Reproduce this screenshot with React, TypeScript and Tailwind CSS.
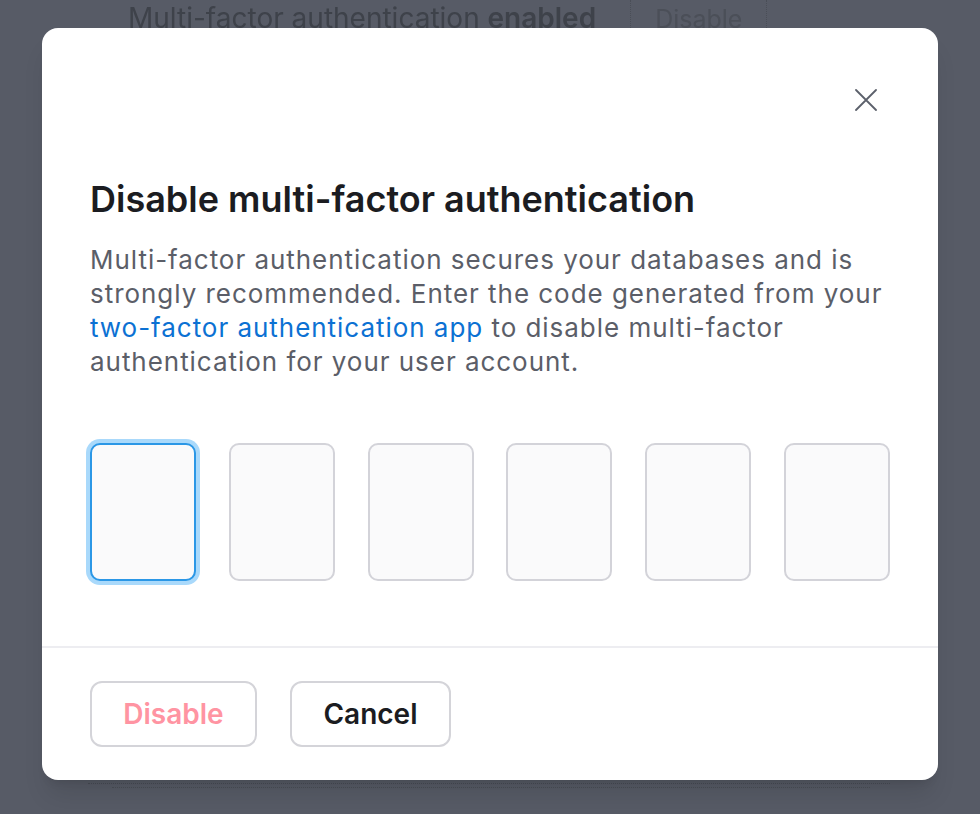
import { useState } from "react";

const DIGITS = 6;

// ── close glyph ─────────────────────────────────────────────────────────────

function CloseIcon() {
  return (
    <svg width="22" height="22" viewBox="0 0 22 22" fill="none">
      <path
        d="M1 1L21 21M21 1L1 21"
        stroke="#5c606b"
        strokeWidth="1.8"
        strokeLinecap="round"
      />
    </svg>
  );
}

// ── code input row ──────────────────────────────────────────────────────────

function CodeInputs() {
  const [values, setValues] = useState<string[]>(Array(DIGITS).fill(""));

  return (
    <div className="flex justify-between">
      {values.map((v, i) => (
        <input
          key={i}
          value={v}
          maxLength={1}
          inputMode="numeric"
          autoFocus={i === 0}
          onChange={(e) => {
            const next = [...values];
            next[i] = e.target.value.slice(-1);
            setValues(next);
          }}
          className={
            i === 0
              ? "h-[138px] w-[106px] rounded-[10px] border-2 border-[#2b97e6] bg-[#fafafb] text-center text-[40px] text-[#1b1c21] outline-none ring-[4px] ring-[#a9d9fb]"
              : "h-[138px] w-[106px] rounded-[10px] border-2 border-[#d3d3d9] bg-[#fafafb] text-center text-[40px] text-[#1b1c21] outline-none"
          }
        />
      ))}
    </div>
  );
}

// ── page ────────────────────────────────────────────────────────────────────

export default function App() {
  return (
    <div className="relative h-[814px] w-[980px] overflow-hidden bg-[#575b66] font-['Inter',sans-serif]">
      {/* page behind the overlay */}
      <div className="flex h-[40px] items-start pl-[128px] blur-[0.5px]">
        <span className="mt-[1px] text-[28px] leading-[34px] text-[#3e424a]">
          Multi-factor authentication <b className="font-semibold">enabled</b>
        </span>
        <div className="ml-[34px] h-[40px] border-l border-dotted border-[#4a4e57]" />
        <span className="mt-[2px] ml-[24px] text-[25px] leading-[34px] text-[#4b4f58]">
          Disable
        </span>
        <div className="ml-[24px] h-[40px] border-l border-dotted border-[#4a4e57]" />
      </div>
      <div className="absolute left-[88px] top-[783px] w-[802px] border-t border-dotted border-[#474b54]" />
      <div className="absolute left-[112px] top-[787px] w-[758px] border-t border-dotted border-[#4a4e57]" />

      {/* modal */}
      <div className="absolute left-[42px] top-[28px] w-[896px] rounded-[16px] bg-white shadow-xl">
        <div className="flex justify-end pr-[61px] pt-[61px]">
          <button type="button" aria-label="Close" className="p-0">
            <CloseIcon />
          </button>
        </div>

        <div className="px-[48px] pt-[66px]">
          <h2 className="text-[36px] font-semibold leading-[44px] text-[#1b1c21]">
            Disable multi-factor authentication
          </h2>
          <p className="mt-[22px] text-[26px] leading-[34px] tracking-[0.037em] text-[#5b5e68]">
            Multi-factor authentication secures your databases and is
            strongly recommended. Enter the code generated from your{" "}
            <a href="#" className="text-[#0c71d3]">
              two-factor authentication app
            </a>{" "}
            to disable multi-factor authentication for your user account.
          </p>
          <div className="pb-[65px] pt-[64px]">
            <CodeInputs />
          </div>
        </div>

        <div className="flex gap-[33px] border-t-2 border-[#ededf1] px-[48px] pb-[33px] pt-[33px]">
          <button
            type="button"
            className="h-[66px] w-[167px] rounded-[12px] border-2 border-[#d4d4d9] text-[28px] font-semibold text-[#ff94a2]"
          >
            Disable
          </button>
          <button
            type="button"
            className="h-[66px] w-[161px] rounded-[12px] border-2 border-[#d4d4d9] text-[28px] font-semibold text-[#1b1c21]"
          >
            Cancel
          </button>
        </div>
      </div>
    </div>
  );
}
